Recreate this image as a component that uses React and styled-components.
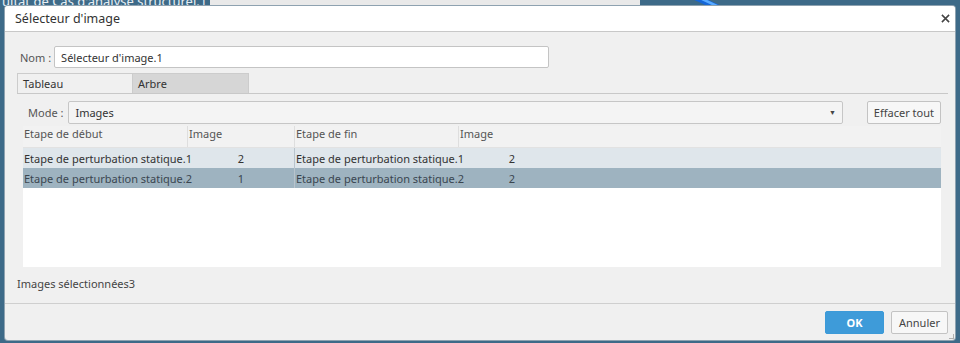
import styled, { createGlobalStyle } from "styled-components";

const GlobalStyle = createGlobalStyle`
  html, body {
    margin: 0;
    padding: 0;
  }
  body {
    font-family: "Noto Sans", "Open Sans", sans-serif;
    font-size: 11px;
    color: #3a3a3a;
  }
`;

const startRows = [
  { start: "Etape de perturbation statique.1", startImage: 2, end: "Etape de perturbation statique.1", endImage: 2 },
  { start: "Etape de perturbation statique.2", startImage: 1, end: "Etape de perturbation statique.2", endImage: 2, selected: true },
];

function App() {
  return (
    <>
      <GlobalStyle />
      <Desktop>
        <BackStrip>
          <BackTitle>
            <span>ultat de Cas d'analyse structurel.1</span>
          </BackTitle>
          <BackPanel />
          <BackBlue>
            <Swoosh viewBox="0 0 50 8">
              <path d="M2 -2 L26 9 L40 9 L16 -2 Z" fill="#1466d8" />
              <path d="M9 -2 L28 7 L34 7 L15 -2 Z" fill="#58aaff" />
            </Swoosh>
          </BackBlue>
        </BackStrip>

        <Dialog>
          <TitleBar>
            <span>Sélecteur d'image</span>
            <CloseIcon viewBox="0 0 10 10">
              <path d="M1 1 L9 9 M9 1 L1 9" stroke="#444" strokeWidth="1.7" />
            </CloseIcon>
          </TitleBar>

          <Body>
            <NameRow>
              <Label>Nom :</Label>
              <TextInput defaultValue="Sélecteur d'image.1" />
            </NameRow>

            <Tabs>
              <Tab $active>Tableau</Tab>
              <Tab>Arbre</Tab>
            </Tabs>

            <TabPanel>
              <ModeRow>
                <Label>Mode :</Label>
                <Select>
                  <span>Images</span>
                  <Caret>▼</Caret>
                </Select>
                <Button>Effacer tout</Button>
              </ModeRow>

              <Table>
                <HeaderRow>
                  <HeadCell $w={164}>Etape de début</HeadCell>
                  <HeadCell $w={107} $divider>Image</HeadCell>
                  <HeadCell $w={164} $divider>Etape de fin</HeadCell>
                  <HeadCell $w={107} $divider>Image</HeadCell>
                </HeaderRow>
                {startRows.map((row) => (
                  <Row key={row.start} $selected={row.selected}>
                    <Cell $w={164}>{row.start}</Cell>
                    <Cell $w={107} $center>{row.startImage}</Cell>
                    <Cell $w={164} $divider>{row.end}</Cell>
                    <Cell $w={107} $center>{row.endImage}</Cell>
                  </Row>
                ))}
              </Table>
            </TabPanel>

            <Summary>Images sélectionnées3</Summary>
          </Body>

          <Footer>
            <Button $primary>OK</Button>
            <Button>Annuler</Button>
            <Grip />
          </Footer>
        </Dialog>
      </Desktop>
    </>
  );
}

const Desktop = styled.div`
  position: relative;
  width: 960px;
  height: 343px;
  background: #3d6a88;
  overflow: hidden;
`;

const BackStrip = styled.div`
  display: flex;
  height: 30px;
`;

const BackTitle = styled.div`
  width: 208px;
  height: 6px;
  overflow: hidden;
  padding-left: 2px;
  color: #e8eef3;
  font-size: 13px;
  line-height: 13px;
  white-space: nowrap;

  span {
    display: block;
    margin-top: -5px;
  }
`;

const BackPanel = styled.div`
  width: 430px;
  background: #e9e9e9;
`;

const BackBlue = styled.div`
  flex: 1;
  padding-left: 48px;
`;

const Swoosh = styled.svg`
  width: 50px;
  height: 8px;
  display: block;
`;

const Dialog = styled.div`
  position: absolute;
  left: 5px;
  top: 6px;
  width: 950px;
  height: 334px;
  display: flex;
  flex-direction: column;
  background: #f0f0f0;
  border-radius: 3px;
  box-shadow: 0 0 0 1px #8ea2b0;
  overflow: hidden;
`;

const TitleBar = styled.div`
  height: 25px;
  flex: none;
  display: flex;
  align-items: center;
  justify-content: space-between;
  padding: 0 5px 0 10px;
  background: #ffffff;
  border-bottom: 1px solid #c8c8c8;
  font-size: 12.5px;
  color: #333;
`;

const CloseIcon = styled.svg`
  width: 9px;
  height: 9px;
`;

const Body = styled.div`
  flex: 1;
  display: flex;
  flex-direction: column;
  padding: 14px 7px 0 12px;
  border-bottom: 1px solid #cfcfcf;
`;

const NameRow = styled.div`
  display: flex;
  align-items: center;
  gap: 3px;
  padding-left: 3px;
`;

const Label = styled.span`
  color: #555;
  white-space: nowrap;
`;

const TextInput = styled.input`
  width: 495px;
  height: 22px;
  box-sizing: border-box;
  border: 1px solid #c4c4c4;
  border-radius: 2px;
  padding: 0 6px;
  font: inherit;
  color: #333;
  background: #fff;
  outline: none;
`;

const Tabs = styled.div`
  display: flex;
  margin-top: 5px;
  border-bottom: 1px solid #c8c8c8;
`;

const Tab = styled.div`
  width: 116px;
  height: 20px;
  box-sizing: border-box;
  padding: 2px 5px 0;
  border: 1px solid #cccccc;
  border-bottom: none;
  background: ${(p) => (p.$active ? "#f0f0f0" : "#d6d6d6")};
  color: #333;
  & + & {
    border-left: none;
  }
`;

const TabPanel = styled.div`
  display: flex;
  flex-direction: column;
  gap: 2px;
  padding: 7px 7px 0 6px;
`;

const ModeRow = styled.div`
  display: flex;
  align-items: center;
  gap: 5px;
  padding-left: 5px;
`;

const Select = styled.div`
  flex: 1;
  height: 23px;
  box-sizing: border-box;
  margin-right: 19px;
  display: flex;
  align-items: center;
  justify-content: space-between;
  padding: 0 6px;
  border: 1px solid #c6c6c6;
  border-radius: 2px;
  background: #f4f4f4;
  color: #333;
`;

const Caret = styled.span`
  font-size: 7px;
  color: #444;
`;

const Button = styled.button`
  height: 23px;
  padding: 0 6px;
  border: 1px solid ${(p) => (p.$primary ? "#3c9ad8" : "#c3c3c3")};
  border-radius: 2px;
  background: ${(p) => (p.$primary ? "#3e9bd9" : "#f7f7f7")};
  color: ${(p) => (p.$primary ? "#ffffff" : "#444")};
  font-family: inherit;
  font-size: 11px;
  font-weight: ${(p) => (p.$primary ? 700 : 400)};
  min-width: ${(p) => (p.$primary ? "59px" : "57px")};
  white-space: nowrap;
`;

const Table = styled.div`
  height: 141px;
  background: #ffffff;
  display: flex;
  flex-direction: column;
`;

const HeaderRow = styled.div`
  display: flex;
  height: 21px;
  flex: none;
  background: #f2f2f2;
  border-bottom: 1px solid #e2e2e2;
`;

const HeadCell = styled.div`
  width: ${(p) => p.$w}px;
  box-sizing: border-box;
  padding: 0 1px;
  border-left: ${(p) => (p.$divider ? "1px solid #dedede" : "none")};
  color: #555;
  white-space: nowrap;
`;

const Row = styled.div`
  display: flex;
  height: 20px;
  flex: none;
  align-items: center;
  background: ${(p) => (p.$selected ? "#9eb3c0" : "#dfe6eb")};
  color: ${(p) => (p.$selected ? "#3a4650" : "#333")};
`;

const Cell = styled.div`
  width: ${(p) => p.$w}px;
  height: 100%;
  box-sizing: border-box;
  display: flex;
  align-items: center;
  justify-content: ${(p) => (p.$center ? "center" : "flex-start")};
  padding-left: 1px;
  border-left: ${(p) => (p.$divider ? "1px solid #b9c4cc" : "none")};
  white-space: nowrap;
`;

const Summary = styled.div`
  margin-top: 9px;
  color: #444;
`;

const Footer = styled.div`
  position: relative;
  height: 36px;
  flex: none;
  display: flex;
  align-items: center;
  justify-content: flex-end;
  gap: 7px;
  padding: 0 7px;
`;

const Grip = styled.div`
  position: absolute;
  right: 1px;
  bottom: 1px;
  width: 4px;
  height: 4px;
  border-right: 1px solid #b0b0b0;
  border-bottom: 1px solid #b0b0b0;
`;

export default App;
